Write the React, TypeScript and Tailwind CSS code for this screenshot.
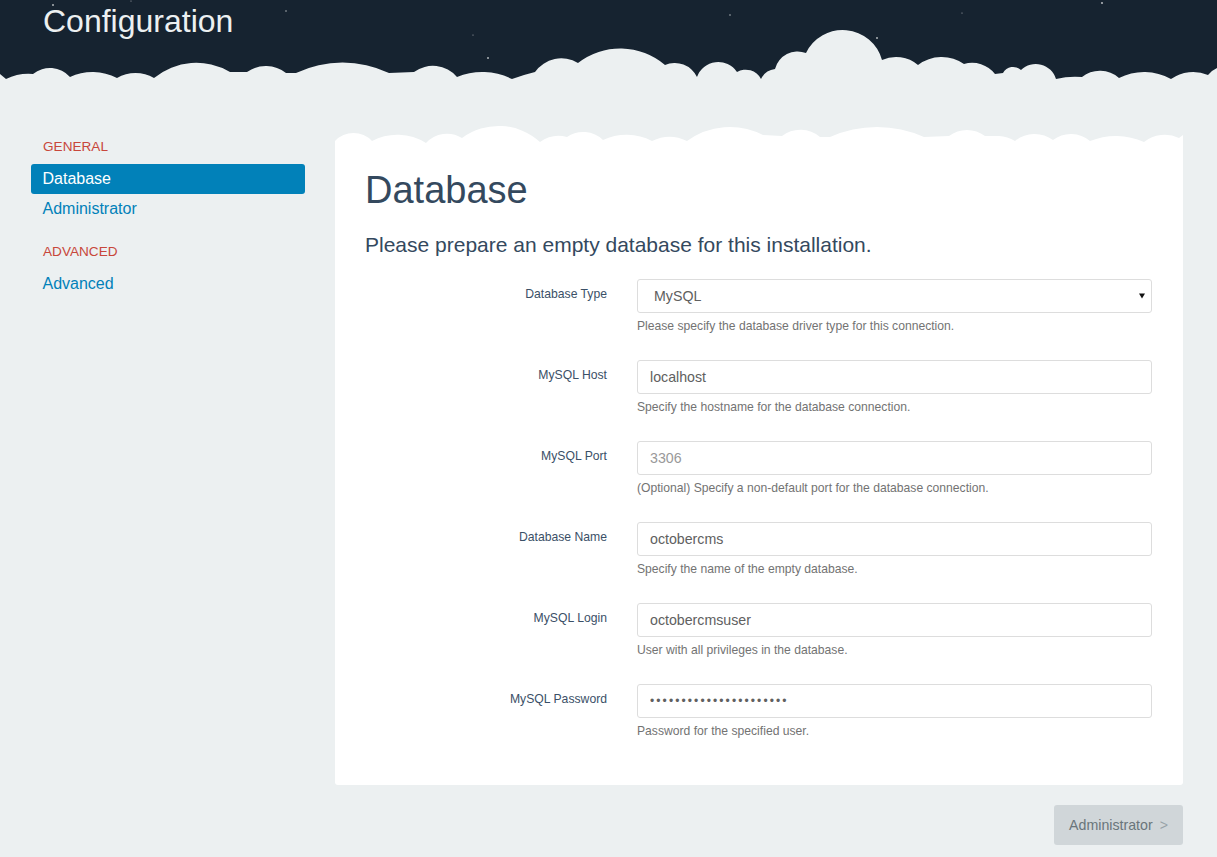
import React from 'react';

const FONT = 'font-["Liberation_Sans",Arial,sans-serif]';

// cloud outline: [x, y] is a straight run to the next cusp, [x, y, px, py] a circular bump through (px, py)
const bumps = (pts: number[][]) =>
  pts
    .slice(1)
    .map((p, i) => {
      const [x0, y0] = pts[i];
      const [x1, y1, px, py] = p;
      if (px === undefined) return `L${x1} ${y1}`;
      const a = Math.hypot(x1 - px, y1 - py);
      const b = Math.hypot(x0 - px, y0 - py);
      const c = Math.hypot(x1 - x0, y1 - y0);
      const area = Math.abs((x1 - x0) * (py - y0) - (px - x0) * (y1 - y0)) / 2;
      if (area < 0.01) return `L${x1} ${y1}`;
      const r = (a * b * c) / (4 * area);
      const large = (x0 - px) * (x1 - px) + (y0 - py) * (y1 - py) > 0 ? 1 : 0;
      return `A${r.toFixed(2)} ${r.toFixed(2)} 0 ${large} 1 ${x1} ${y1}`;
    })
    .join(' ');

const headerCusps = [
  [0, 74], [6, 79], [33, 74, 20, 74.5], [70, 77, 49, 68], [117, 78, 93, 72], [154, 78, 134, 73], [230, 72, 191, 63],
  [247, 72], [286, 73, 265, 66], [296, 73], [389, 73, 331, 63], [414, 72], [457, 77, 430, 66], [512, 79, 482, 72],
  [535, 72, 524, 75], [578, 63, 555, 59], [665, 65, 612, 49], [697, 77, 677, 63], [737, 72, 718, 62], [761, 79, 749, 70],
  [775, 69, 767, 72], [806, 53, 787, 54], [882, 60, 842, 30], [918, 65, 895, 57], [964, 64, 940, 57], [995, 74, 975, 63],
  [1003, 73], [1021, 70, 1012, 67], [1056, 79, 1035, 64], [1082, 77, 1068, 77], [1119, 78, 1097, 71], [1171, 79, 1142, 72],
  [1208, 75, 1191, 72], [1217, 68, 1212, 71],
];

const panelCusps = [
  [0, 16], [37, 16, 17, 8], [91, 18, 57, 10], [127, 13, 108, 9], [205, 17, 160, 1], [232, 12, 222, 11], [268, 15, 247, 7],
  [317, 16, 287, 10], [352, 16, 333, 12], [428, 10, 392, 2], [447, 11], [485, 12, 462, 5], [495, 12], [589, 12, 540, 2],
  [614, 11], [650, 11, 630, 5], [664, 11], [680, 16, 672, 12.5], [718, 15, 700, 9], [755, 16, 734, 9], [809, 17, 777, 11],
  [844, 13, 827, 10], [848, 10],
];

const stars = [
  [53, 5, 1], [131, 1, 0.6], [286, 11, 0.8], [473, 35, 0.6], [488, 58, 1], [730, 15, 0.8], [877, 38, 1], [962, 13, 0.6], [1102, 3, 1.1],
];

const fields = [
  { label: 'MySQL Host', value: 'localhost', help: 'Specify the hostname for the database connection.' },
  { label: 'MySQL Port', placeholder: '3306', help: '(Optional) Specify a non-default port for the database connection.' },
  { label: 'Database Name', value: 'octobercms', help: 'Specify the name of the empty database.' },
  { label: 'MySQL Login', value: 'octobercmsuser', help: 'User with all privileges in the database.' },
  { label: 'MySQL Password', value: '•'.repeat(22), password: true, help: 'Password for the specified user.' },
];

const inputClass =
  'block w-full h-[34px] border border-[#dddddd] rounded-[3px] bg-white text-[#606060] outline-none placeholder:text-[#999999]';

const Row = ({ label, help, children }: { label: string; help: string; children: React.ReactNode }) => (
  <div className="grid grid-cols-[242px_515px] gap-x-[30px] h-[81px]">
    <label className="text-[12.2px] text-[#3b5067] text-right pt-[8px] leading-[14px]">{label}</label>
    <div>
      {children}
      <p className="text-[12.15px] text-[#737373] mt-[6px] leading-[14px]">{help}</p>
    </div>
  </div>
);

export default function App() {
  return (
    <div className={`${FONT} bg-[#ecf0f1] min-h-[857px] overflow-hidden`}>
      {/* HEADER */}
      <div className="relative h-[80px] bg-[#162330]">
        <svg className="block" width="1217" height="80" viewBox="0 0 1217 80">
          <path d={`M0 80 L0 74 ${bumps(headerCusps)} L1217 80 Z`} fill="#ecf0f1" />
          {stars.map((s, i) => (
            <circle key={i} cx={s[0]} cy={s[1]} r={s[2]} fill="#ffffff" opacity="0.65" />
          ))}
        </svg>
        <h1 className="absolute left-[43px] top-[2px] text-[32px] leading-[38px] text-[#ecf0f1]">Configuration</h1>
      </div>

      <div className="flex pl-[31px] pr-[34px] pt-[45px] gap-[30px]">
        {/* SIDEBAR */}
        <div className="w-[274px] shrink-0 pt-[14px]">
          <div className="pl-[12px] text-[13.6px] leading-[16px] text-[#c8473b]">GENERAL</div>
          <div className="mt-[9px] h-[30px] pl-[11.5px] rounded-[3px] bg-[#0181b9] text-white text-base leading-[29px]">Database</div>
          <div className="h-[30px] pl-[11.5px] text-[#0181b9] text-base leading-[29px]">Administrator</div>
          <div className="mt-[20px] pl-[12px] text-[13.6px] leading-[16px] text-[#c8473b]">ADVANCED</div>
          <div className="mt-[11px] h-[30px] pl-[11.5px] text-[#0181b9] text-base leading-[26px]">Advanced</div>
        </div>

        {/* PANEL */}
        <div className="w-[848px]">
          <svg className="block" width="848" height="20" viewBox="0 0 848 20">
            <path d={`M0 20 L0 16 ${bumps(panelCusps)} L848 20 Z`} fill="#ffffff" />
          </svg>
          <div className="bg-white rounded-b-[3px] h-[640px] px-[30px] pt-[22px]">
            <h2 className="text-[38px] leading-[46px] text-[#34495e]">Database</h2>
            <p className="text-[21px] leading-[24px] text-[#34495e] mt-[20px] mb-[22px]">Please prepare an empty database for this installation.</p>
            <Row label="Database Type" help="Please specify the database driver type for this connection.">
              <div className="relative">
                <select defaultValue="MySQL" className={`${inputClass} text-[14.2px] appearance-none pl-[16px] pt-[2px]`}>
                  <option>MySQL</option>
                </select>
                <svg className="absolute right-[7px] top-[14px]" width="6" height="6" viewBox="0 0 6 6">
                  <path d="M0 0.5 H6 L3 5.5 Z" fill="#111111" />
                </svg>
              </div>
            </Row>
            {fields.map(f => (
              <Row key={f.label} label={f.label} help={f.help}>
                <input
                  readOnly
                  type="text"
                  defaultValue={f.value}
                  placeholder={f.placeholder}
                  className={`${inputClass} px-3 ${f.password ? 'text-[12px] tracking-[2.1px]' : 'text-[14.2px]'}`}
                />
              </Row>
            ))}
          </div>
          <div className="flex justify-end mt-[20px] pb-[12px]">
            <div className="h-[40px] w-[129px] flex items-center justify-center pt-[2px] rounded-[3px] bg-[#d0d6d9] text-[14.2px] text-[#6a757b]">
              Administrator<span className="ml-[7px] text-[#98a2a7]">&gt;</span>
            </div>
          </div>
        </div>
      </div>
    </div>
  );
}
